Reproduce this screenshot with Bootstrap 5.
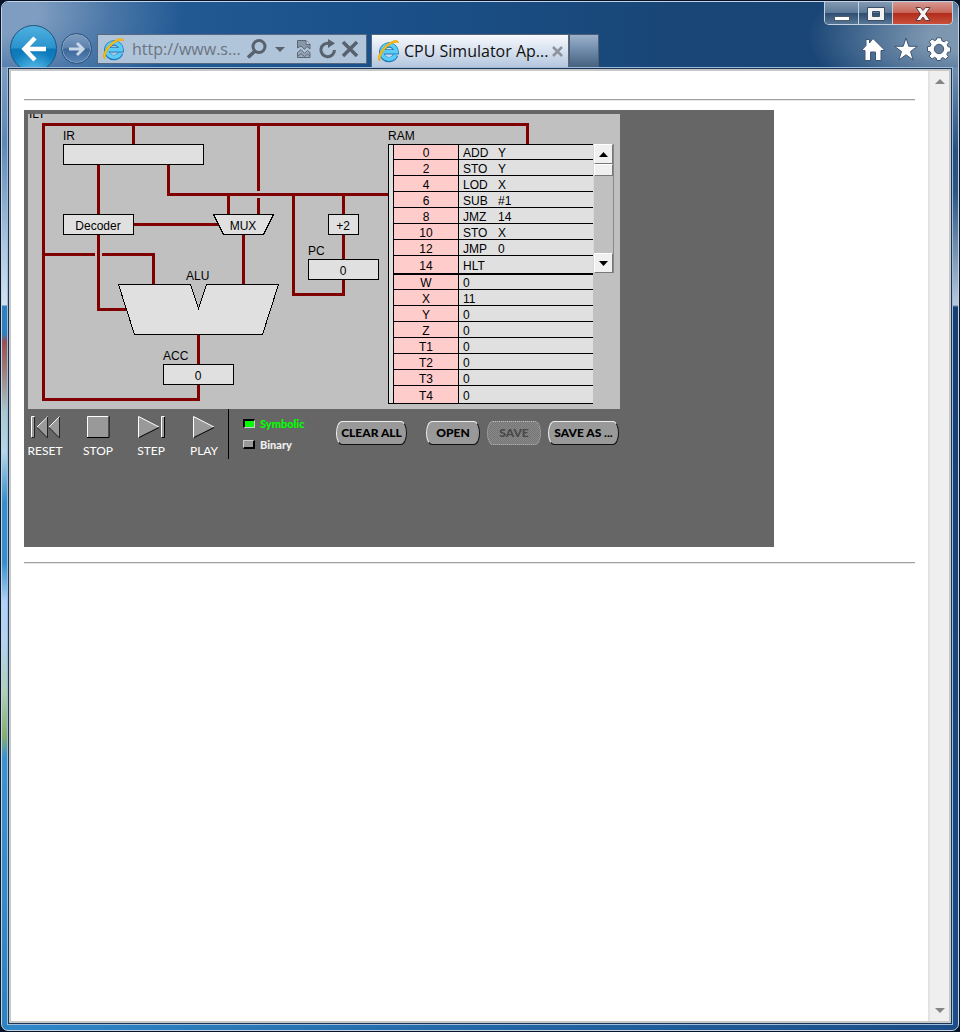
<!DOCTYPE html>
<html lang="en">
<head>
<meta charset="utf-8">
<meta name="viewport" content="width=device-width, initial-scale=1">
<title>CPU Simulator Applet</title>
<link href="https://cdn.jsdelivr.net/npm/bootstrap@5.3.0/dist/css/bootstrap.min.css" rel="stylesheet">
<style>
body { background: #07142a; font-family: "Open Sans", "Noto Sans", sans-serif; }
button { padding: 0; }
svg { display: block; flex: none; }

/* browser window frame */
.win {
  min-height: calc(100vh - 2px); margin: 1px; border: 1px solid #c3d3e4; border-radius: 7px; overflow: hidden;
  background:
    linear-gradient(#7294b9 0, #7c9cc0 70px, #5c88b5 140px, #a9c5df 240px, #d3e1ef 303px, #2f80bd 304px, #2f80bd 332px, #9c5050 340px, #a08078 370px, #a9c8cc 410px, #b4d6e6 450px, #358fca 500px, #358fca 560px, #b0d2fa 600px, #b3d3f0 640px, #b0d0b0 690px, #86ad6a 735px, #3a94cf 755px, #2d82c0 100%) left / 7px 100% no-repeat,
    linear-gradient(#7490b0 0, #6d8cad 70px, #25507f 150px, #2b5684 190px, #b9c8da 303px, #163f73 305px, #1b4c86 100%) right / 7px 100% no-repeat,
    linear-gradient(90deg, #2f88c8, #2367a6 50%, #1b4c86);
}
.chrome-top {
  height: 65px;
  background:
    radial-gradient(ellipse 180px 110px at 0 10px, #7f9dc0 20%, rgba(90,130,175,.7) 60%, transparent),
    radial-gradient(ellipse 150px 70px at 100% 55%, #7d97b1 20%, rgba(110,140,170,.6) 60%, transparent),
    linear-gradient(90deg, #2a629c, #1b528c 35%, #194677 70%, #1a4574);
}
.caption-bar { height: 23px; padding-right: 5px; }
.caption { border: 1px solid #c5d3e0; border-top: 0; border-radius: 0 0 5px 5px; overflow: hidden; }
.caption button { width: 34px; height: 22px; border: 0; border-right: 1px solid #c5d3e0; background: linear-gradient(#8399b2, #5d7a99 48%, #2d4c70 50%, #587795); }
.caption .shut { width: 59px; border-right: 0; background: linear-gradient(#d59a92, #c8665a 48%, #b12a1b 50%, #c9503a); }
.caption svg { margin: auto; }
.tool-row { height: 42px; overflow: hidden; }
.go-back { width: 47px; height: 47px; margin-left: 8px; border: 1px solid #23537f; border-radius: 50%; background: radial-gradient(circle at 50% 105%, #5fc0ea, transparent 45%), linear-gradient(#4fb0e0, #2a93cd 49%, #0a77b8 51%, #1789c8); }
.go-next { width: 31px; height: 31px; margin: 8px 5px 0 4px; border: 1px solid #2b527e; border-radius: 50%; background: linear-gradient(#7f9cbf, #5c82ae 49%, #3b6699 51%, #5b86b6); box-shadow: inset 0 0 0 1px #86a3c4; }
.go-back svg, .go-next svg { margin: auto; }
.address { flex: 0 1 270px; min-width: 0; height: 30px; margin-top: 9px; padding: 0 6px 0 4px; border: 1px solid #56697f; background: #b0c4da; }
.address input { flex: 1 1 0; min-width: 0; margin-left: 7px; padding: 0; border: 0; background: none; color: #6c7480; font-size: 16px; line-height: 24px; }
.address button, .quick a, .page-tab button { border: 0; background: none; }
.page-tab { flex: 0 1 198px; min-width: 0; height: 33px; margin: 9px 0 0 4px; padding: 0 5px 0 5px; border: 1px solid #5b6675; border-bottom: 0; background: linear-gradient(#f6f9fd, #d7e1ef 50%, #b4c6de); color: #111; font-size: 16px; }
.new-tab { width: 30px; height: 33px; margin-top: 9px; border: 1px solid #4d5f76; border-bottom: 0; background: linear-gradient(#9cb2cc, #6d88a8 50%, #46627f); }
.quick { gap: 9px; margin: 12px 7px 0 auto; }

/* page area */
.client { margin: 2px 7px 7px; border: 2px solid #c8c8c8; box-shadow: 0 0 0 1px #1b3558, 0 0 0 2px #9fbddb; background: #fff; }
.doc { min-width: 0; padding: 28px 13px 0 13px; }
.rule { height: 2px; margin: 0; border: 0; border-top: 1px solid #a0a0a0; border-bottom: 1px solid #e8e8e8; opacity: 1; }
.page-scroll { width: 21px; padding: 8px 0; border-left: 2px solid #e3e3e3; background: #efefef; }

/* applet */
.applet { max-width: 750px; height: 437px; margin: 9px 0 15px; padding: 4px; background: #666; font-family: "Liberation Sans", Arial, sans-serif; font-size: 12px; line-height: 14px; color: #000; }
.panel { width: 592px; height: 295px; overflow: hidden; background: #c0c0c0; }
.diagram { width: 360px; height: 295px; overflow: visible; font-size: 12px; }
.wire { fill: none; stroke: #800000; stroke-width: 3; shape-rendering: crispEdges; }
.part { fill: #e0e0e0; stroke: #000; shape-rendering: crispEdges; }
.ram { padding-top: 15px; }
.ram-title { height: 15px; position: relative; }
.cells { width: 205px; border-collapse: separate; border-spacing: 0; border: 1px solid #000; border-right: 0; border-width: 1px 0 1px 1px; background: #e0e0e0; padding-left: 4px; }
.cells th, .cells td { height: 16px; padding: 0; border-bottom: 1px solid #000; font-weight: 400; line-height: 12px; vertical-align: bottom; white-space: pre; }
.cells th { width: 66px; border-left: 1px solid #000; border-right: 1px solid #000; background: #fcc; text-align: center; }
.cells td { padding-left: 4px; }
.cells .short > * { height: 15px; }
.cells .split > * { height: 19px; border-bottom-width: 2px; padding-bottom: 1px; }
.cells .final > * { height: 17px; padding-bottom: 1px; border-bottom: 0; }
.op { display: inline-block; width: 35px; }
.ram-scroll { width: 21px; height: 129px; border-left: 1px solid #d8d8d8; border-right: 1px solid #888; background: #c0c0c0; }
.ram-scroll button, .thumb { height: 20px; border: 1px solid; border-color: #fff #777 #777 #fff; background: #f0f0f0; }
.thumb { height: 12px; }
.ram-scroll svg { margin: auto; }

.controls { height: 50px; margin-left: -4px; font-family: Lato, sans-serif; }
.transport { gap: 11px; padding-right: 3px; border-right: 1px solid #000; }
.transport button { width: 42px; padding-top: 6px; border: 0; background: none; color: #fff; font-size: 12px; line-height: 14px; }
.transport svg { margin: 0 auto 5px; }
.modes { width: 107px; padding: 8px 0 0 14px; font-size: 11px; font-weight: 900; line-height: 13px; color: #eee; gap: 8px; }
.modes label { gap: 5px; }
.modes input { appearance: none; width: 12px; height: 9px; margin: 0; border: 1px solid; border-color: #ccc #000 #000 #ccc; border-width: 1px 2px 2px 1px; background: #999; }
.modes input:checked { border-color: #000 #ccc #ccc #000; border-width: 2px 1px 1px 2px; background: #0f0; }
.modes input:checked + span { color: #0f0; }
.files { gap: 19px; padding-top: 12px; }
.file-group { gap: 7px; }
.pill { width: 71px; height: 24px; border: 1px solid; border-color: #eee #111 #111 #eee; border-radius: 6px / 12px; background: #999; color: #000; font-size: 12px; font-weight: 900; line-height: 22px; white-space: nowrap; }
.pill.narrow { width: 54px; }
.pill:disabled { border: 1px dotted #bbb; background: repeating-conic-gradient(#888 0 25%, #767676 0 50%) 0 0 / 2px 2px; color: #484848; }
</style>
</head>
<body>
<svg width="0" height="0" class="position-absolute" aria-hidden="true">
  <defs>
    <symbol id="globe" viewBox="0 0 24 24">
      <path d="M19.500 16.200A7.600 7.600 0 1 1 20 12.800H7" fill="none" stroke="#1f7dbd" stroke-width="5.500"/>
      <path d="M19.300 16.200A7.500 7.500 0 1 1 20 12.800H7" fill="none" stroke="#5ccbf5" stroke-width="3.800"/>
      <path d="M3 22.500C-1 20 4 10 11 5S22 0 22.500 3.500C22 2.500 18 2 12.500 6S2.500 17 3 22.500Z" fill="#f8c21c" stroke="#e9ab12" stroke-width="1"/>
    </symbol>
  </defs>
</svg>
<div class="win d-flex flex-column">
  <header class="chrome-top">
    <div class="caption-bar d-flex justify-content-end">
      <div class="caption d-flex">
        <button type="button" aria-label="Minimize"><svg width="18" height="20"><rect x="1.500" y="13.500" width="15" height="4" fill="#fff" stroke="#4c5c70"/></svg></button>
        <button type="button" aria-label="Maximize"><svg width="18" height="20"><path d="M.500 4.500h17v13H.500zM5.500 8.500v5h7v-5z" fill="#f2f2f2" fill-rule="evenodd" stroke="#3c4c62"/></svg></button>
        <button type="button" class="shut" aria-label="Close"><svg width="16" height="20"><path d="M1 4.500h4.500L8 7.500l2.500-3H15L10.500 11l4.500 6.500h-4.500L8 14l-2.500 3.500H1L5.500 11z" fill="#f4f4f4" stroke="#5a3c40"/></svg></button>
      </div>
    </div>
    <div class="tool-row d-flex align-items-start">
      <button type="button" class="go-back" aria-label="Back"><svg width="26" height="26"><path d="M25 13H4M14 2 3.500 13 14 24" fill="none" stroke="#fff" stroke-width="4.500"/></svg></button>
      <button type="button" class="go-next" aria-label="Forward"><svg width="18" height="16"><path d="M1 8h14M9 2l6 6-6 6" fill="none" stroke="#c9d6e6" stroke-width="3"/></svg></button>
      <form class="address d-flex align-items-center">
        <svg width="23" height="24"><use href="#globe"/></svg>
        <input type="text" value="http://www.s..." aria-label="Address">
        <button type="button" aria-label="Search"><svg width="21" height="20"><circle cx="13" cy="7.500" r="6" fill="none" stroke="#58616e" stroke-width="3"/><path d="M9 12 2 18.500" stroke="#58616e" stroke-width="3.500"/></svg></button>
        <button type="button" class="ms-2" aria-label="Address list"><svg width="10" height="5"><path d="M0 0h10L5 5z" fill="#58616e"/></svg></button>
        <button type="button" class="ms-2 ps-1" aria-label="Compatibility view"><svg width="14" height="18"><path d="M.500 8v-7.500h8.500l4 4V9l-3-2.500-2.500 3-3.500-3.500z" fill="#8796a8" stroke="#5c6775"/><path d="M9 .500v4h4" fill="#c2cfdd" stroke="#5c6775"/><path d="M.500 17.500v-5l3.500-3 3.500 4 3-3 2.500 2v5z" fill="#9aa9ba" stroke="#5c6775"/><path d="M1 16l3-2.500 3.500 3 3-2.500 2.500 2" fill="none" stroke="#5c6775"/></svg></button>
        <button type="button" class="ms-2" aria-label="Refresh"><svg width="18" height="20"><path d="M15.500 11A6.800 6.800 0 1 1 10 4.300" fill="none" stroke="#58616e" stroke-width="3"/><path d="M9 0l7 4.300L9 9z" fill="#58616e"/></svg></button>
        <button type="button" class="ms-1" aria-label="Stop loading"><svg width="19" height="18"><path d="M2 2l14 14M16 2 2 16" stroke="#58616e" stroke-width="3.500"/></svg></button>
      </form>
      <div class="page-tab d-flex align-items-center">
        <svg width="23" height="24"><use href="#globe"/></svg>
        <span class="flex-fill text-nowrap ps-1">CPU Simulator Ap...</span>
        <button type="button" aria-label="Close tab"><svg width="11" height="11"><path d="M1 1l9 9M10 1l-9 9" stroke="#8d949d" stroke-width="2.500"/></svg></button>
      </div>
      <button type="button" class="new-tab" aria-label="New tab"></button>
      <nav class="quick d-flex" aria-label="Browser tools">
        <a href="#" aria-label="Home"><svg width="24" height="24"><path d="M4 23.500V13.500H.500L5 8.500V2.500h3.500V6L12 1.500l12 12h-4v10h-5.500V15h-5v8.500z" fill="#fff" stroke="#3e5674"/></svg></a>
        <a href="#" aria-label="Favorites"><svg width="24" height="24"><path d="M12 1l2.800 8.300h8.700l-7 5.200 2.700 8.500-7.200-5.200L4.800 23l2.700-8.500-7-5.200h8.700z" fill="#fff" stroke="#3e5674"/></svg></a>
        <a href="#" aria-label="Tools"><svg width="24" height="24" viewBox="-12 -12 24 24"><g fill="#fff" stroke="#3e5674"><path d="M-2.300-11.200h4.600l.6 3 2.300 1L7.700-8.900 9.900-6.700 8.200-4.200l.9 2 2.400.4v4.600l-2.800.5-.9 2 1.600 2.400-3 2.600-2.500-1.700-1.600.7-.5 2.200h-4l-.6-2.400-1.700-.7-2.400 1.600-3-2.900L-8 4.700l-.9-1.900-2.600-.5v-4.600l2.800-.5.7-1.900-1.700-2.500L-6.900-10l2.500 1.600 1.500-.6z"/><circle r="4.700" fill="#667f9c"/></g></svg></a>
      </nav>
    </div>
  </header>

  <div class="client d-flex flex-fill">
    <main class="doc flex-fill">
      <hr class="rule">
      <section class="applet" aria-label="CPU simulator">
        <div class="panel d-flex align-items-start">
          <svg class="diagram" viewBox="28 114 360 295">
            <g class="wire">
              <path d="M527.500 145V124.500H43.500V399.500H198.500V385M133.500 124.500V145"/>
              <path d="M258.500 124.500V191M258.500 198V215M98.500 165V215M168.500 165V194.500H388M228.500 194.500V215"/>
              <path d="M293.500 194.500V294.500H343.500V280M343.500 194.500V260M134 224.500H219M98.500 235V309.500H127"/>
              <path d="M43.500 254.500H95M102 254.500H153.500V285M243.500 235V285M198.500 334V365"/>
            </g>
            <g class="part">
              <rect x="63.500" y="144.500" width="140" height="20"/>
              <rect x="63.500" y="214.500" width="70" height="20"/>
              <rect x="328.500" y="214.500" width="30" height="20"/>
              <rect x="308.500" y="259.500" width="70" height="20"/>
              <rect x="163.500" y="364.500" width="70" height="20"/>
              <path d="M213.500 214.500h60l-10 20h-40z"/>
              <path d="M118.500 284.500h72l8 24 8-24h72l-16 50h-128z"/>
            </g>
            <text x="29" y="118">ILT</text>
            <text x="63" y="140">IR</text>
            <text x="308" y="255">PC</text>
            <text x="186" y="280">ALU</text>
            <text x="163" y="360">ACC</text>
            <g text-anchor="middle">
              <text x="98" y="230">Decoder</text>
              <text x="243" y="230">MUX</text>
              <text x="343" y="230">+2</text>
              <text x="343" y="275">0</text>
              <text x="198" y="380">0</text>
            </g>
          </svg>
          <div class="ram">
            <div class="ram-title">RAM</div>
            <div class="d-flex align-items-start">
              <table class="cells">
                <tbody>
                  <tr class="short"><th scope="row">0</th><td><span class="op">ADD</span>Y</td></tr>
                  <tr><th scope="row">2</th><td><span class="op">STO</span>Y</td></tr>
                  <tr><th scope="row">4</th><td><span class="op">LOD</span>X</td></tr>
                  <tr><th scope="row">6</th><td><span class="op">SUB</span>#1</td></tr>
                  <tr><th scope="row">8</th><td><span class="op">JMZ</span>14</td></tr>
                  <tr><th scope="row">10</th><td><span class="op">STO</span>X</td></tr>
                  <tr><th scope="row">12</th><td><span class="op">JMP</span>0</td></tr>
                  <tr class="split"><th scope="row">14</th><td>HLT</td></tr>
                  <tr class="short"><th scope="row">W</th><td>0</td></tr>
                  <tr><th scope="row">X</th><td>11</td></tr>
                  <tr><th scope="row">Y</th><td>0</td></tr>
                  <tr><th scope="row">Z</th><td>0</td></tr>
                  <tr><th scope="row">T1</th><td>0</td></tr>
                  <tr><th scope="row">T2</th><td>0</td></tr>
                  <tr><th scope="row">T3</th><td>0</td></tr>
                  <tr class="final"><th scope="row">T4</th><td>0</td></tr>
                </tbody>
              </table>
              <div class="ram-scroll d-flex flex-column">
                <button type="button" aria-label="Scroll up"><svg width="9" height="5"><path d="M0 5h9L4.500 0z"/></svg></button>
                <div class="thumb"></div>
                <button type="button" class="mt-auto" aria-label="Scroll down"><svg width="9" height="5"><path d="M0 0h9L4.500 5z"/></svg></button>
              </div>
            </div>
          </div>
        </div>
        <div class="controls d-flex align-items-start">
          <div class="transport d-flex h-100 align-items-start">
            <button type="button"><svg width="30" height="24"><path d="M1.500 1.500h3v21h-3zM18 2v21L7 12zM29.500 2v21L19 12z" fill="#999"/><path d="M1.500 22.500v-21h3M7 12 18 1.500M19 12 29.500 1.500" fill="none" stroke="#fff"/><path d="M4.500 2v20.500h-3M7 12.500 17.500 23V2M19 12.500 29.500 23V2" fill="none" stroke="#222"/></svg>RESET</button>
            <button type="button"><svg width="23" height="24"><path d="M1 1h21v21H1z" fill="#999"/><path d="M.500 22V1.500H22" fill="none" stroke="#fff"/><path d="M22 1v21.500H0" fill="none" stroke="#000"/></svg>STOP</button>
            <button type="button"><svg width="27" height="24"><path d="M1 1.500v21L21 12zM23 1.500h3v21h-3z" fill="#999"/><path d="M.500 22.500V1.500L21 12M23.500 22.500v-21h3" fill="none" stroke="#fff"/><path d="M1 22.500 21 12.500M26.500 2v20.500h-3" fill="none" stroke="#000"/></svg>STEP</button>
            <button type="button"><svg width="22" height="24"><path d="M1 1.500v21L21 12z" fill="#999"/><path d="M.500 22.500V1.500L21 12" fill="none" stroke="#fff"/><path d="M1 22.500 21 12.500" fill="none" stroke="#000"/></svg>PLAY</button>
          </div>
          <div class="modes d-flex flex-column">
            <label class="d-flex align-items-center"><input type="radio" name="mode" checked><span>Symbolic</span></label>
            <label class="d-flex align-items-center"><input type="radio" name="mode"><span>Binary</span></label>
          </div>
          <div class="files d-flex">
            <button type="button" class="pill">CLEAR ALL</button>
            <div class="file-group d-flex">
              <button type="button" class="pill narrow">OPEN</button>
              <button type="button" class="pill narrow" disabled>SAVE</button>
              <button type="button" class="pill">SAVE AS ...</button>
            </div>
          </div>
        </div>
      </section>
      <hr class="rule">
    </main>
    <div class="page-scroll d-flex flex-column align-items-center justify-content-between" aria-hidden="true">
      <svg width="10" height="5"><path d="M0 5h10L5 0z" fill="#858585"/></svg>
      <svg width="10" height="5"><path d="M0 0h10L5 5z" fill="#858585"/></svg>
    </div>
  </div>
</div>
<script src="https://cdn.jsdelivr.net/npm/bootstrap@5.3.0/dist/js/bootstrap.bundle.min.js"></script>
</body>
</html>
